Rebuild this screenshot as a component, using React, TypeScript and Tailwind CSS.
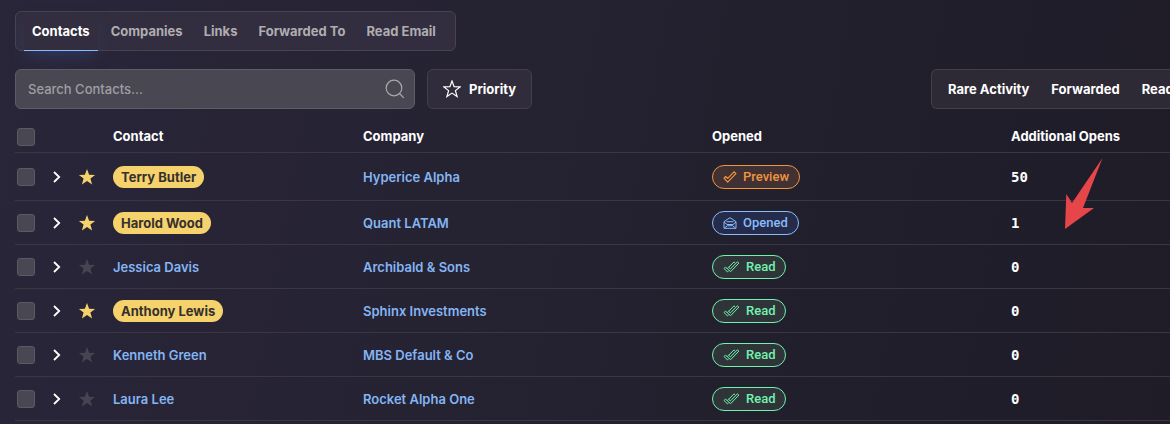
import React from 'react'
import clsx from 'clsx'

type Status = 'Preview' | 'Opened' | 'Read'

interface Contact {
  name: string
  company: string
  status: Status
  additionalOpens: number
  priority: boolean
}

const TABS = ['Contacts', 'Companies', 'Links', 'Forwarded To', 'Read Email']

const FILTERS = ['Rare Activity', 'Forwarded', 'Read']

const CONTACTS: Contact[] = [
  { name: 'Terry Butler', company: 'Hyperice Alpha', status: 'Preview', additionalOpens: 50, priority: true },
  { name: 'Harold Wood', company: 'Quant LATAM', status: 'Opened', additionalOpens: 1, priority: true },
  { name: 'Jessica Davis', company: 'Archibald & Sons', status: 'Read', additionalOpens: 0, priority: false },
  { name: 'Anthony Lewis', company: 'Sphinx Investments', status: 'Read', additionalOpens: 0, priority: true },
  { name: 'Kenneth Green', company: 'MBS Default & Co', status: 'Read', additionalOpens: 0, priority: false },
  { name: 'Laura Lee', company: 'Rocket Alpha One', status: 'Read', additionalOpens: 0, priority: false },
]

const STATUS_STYLES: Record<Status, string> = {
  Preview: 'border-[#f0953f] bg-[#413133] text-[#f0953f]',
  Opened: 'border-[#8abcfb] bg-[#252b4b] text-[#8abcfb]',
  Read: 'border-[#72f2ae] bg-[#2f3439] text-[#72f2ae]',
}

const STAR_PATH = 'M9 1l2.1 5.700 6 .2-4.700 3.700 1.700 5.900L9 13.100l-5.100 3.400 1.700-5.900L.9 6.900l6-.2z'

const StatusIcon = ({ status }: { status: Status }) => {
  if (status === 'Preview') {
    return (
      <svg width="14" height="12" viewBox="0 0 14 12" fill="none" stroke="currentColor" strokeWidth="1.2" strokeLinejoin="round" aria-hidden="true">
        <path d="M1 7.200l1.700-1.700 2 1.800L11 .8l1.900 1.800-8.200 8.500z" />
      </svg>
    )
  }
  if (status === 'Opened') {
    return (
      <svg width="14" height="12" viewBox="0 0 14 12" fill="none" stroke="currentColor" strokeLinejoin="round" aria-hidden="true">
        <path d="M1 4.600L7 .7l6 3.900v6.700H1z" />
        <path d="M1 5l3 2.500h6L13 5M1.400 11l3-2.300h5.200l3 2.300M3.500 4.700h7" />
      </svg>
    )
  }
  return (
    <svg width="17" height="12" viewBox="0 0 17 12" fill="none" stroke="currentColor" strokeLinejoin="round" aria-hidden="true">
      <path d="M4.200 7.600l1.400-1.300 1.800 1.600L14.400.8l1.500 1.300-8.300 8.600z" />
      <path d="M4.500 10.900L1 7.500l1.400-1.400 1.800 1.500M5.600 6.300L11 .9l1 .8M4.500 10.900l1.300-1.300" />
    </svg>
  )
}

const Checkbox = ({ label }: { label: string }) => (
  <input
    type="checkbox"
    aria-label={label}
    className="block h-[18px] w-[18px] appearance-none rounded-[3px] border border-[#5b5963] bg-[#494852] checked:bg-[#8abcfb]"
  />
)

const ContactRow = ({ contact }: { contact: Contact }) => (
  <tr className="h-11 border-b border-[#3a3742] first:h-12 [&>td]:pt-0.5">
    <td className="pl-[2px]">
      <Checkbox label={`Select ${contact.name}`} />
    </td>
    <td>
      <button type="button" aria-label={`Expand ${contact.name}`} className="block">
        <svg width="8" height="12" viewBox="0 0 8 12" fill="none" stroke="white" strokeWidth="1.8" aria-hidden="true">
          <path d="M1 1l5.200 5L1 11" />
        </svg>
      </button>
    </td>
    <td>
      <button
        type="button"
        aria-label={`Toggle priority for ${contact.name}`}
        className={clsx('block', contact.priority ? 'text-[#f5d26b]' : 'text-[#474452]')}
      >
        <svg width="18" height="18" viewBox="0 0 18 18" fill="currentColor" aria-hidden="true">
          <path d={STAR_PATH} />
        </svg>
      </button>
    </td>
    <td>
      <a
        href="#"
        className={clsx(
          contact.priority
            ? 'inline-block h-[22px] rounded-full bg-[#f5d26b] px-2 align-middle font-bold leading-[22px] text-[#35302f]'
            : 'font-semibold text-[#84b5f3]'
        )}
      >
        {contact.name}
      </a>
    </td>
    <td>
      <a href="#" className="font-semibold text-[#84b5f3]">{contact.company}</a>
    </td>
    <td>
      <span
        className={clsx(
          "inline-flex h-6 items-center gap-1.5 rounded-full border px-2.5 align-middle font-['Roboto',sans-serif] font-medium",
          STATUS_STYLES[contact.status]
        )}
      >
        <StatusIcon status={contact.status} />
        {contact.status}
      </span>
    </td>
    <td className="font-['DejaVu_Sans_Mono',monospace] text-sm font-bold">{contact.additionalOpens}</td>
  </tr>
)

const App: React.FC = () => {
  return (
    <main className="relative min-h-screen overflow-hidden bg-linear-[100deg] from-[#2a263a] via-[#242130] to-[#1f1c28] pt-[11px] pl-[15px] font-['Inter',sans-serif] text-[13px] leading-5 text-white">
      <nav className="flex h-10 w-fit gap-[5px] rounded-md border border-[#474351] bg-[#322e3f] pr-[11px] pl-2">
        {TABS.map((tab, index) => (
          <a
            key={tab}
            href="#"
            aria-current={index === 0 ? 'page' : undefined}
            className={clsx(
              '-mb-px flex items-center border-b px-2 font-bold',
              index === 0
                ? 'border-[#8abcfb] text-white shadow-[0_8px_16px_-4px_#34467a99]'
                : 'border-transparent text-[#b0adb1]'
            )}
          >
            {tab}
          </a>
        ))}
      </nav>

      <div className="mt-[18px] flex">
        <label className="flex h-10 w-[400px] items-center rounded-md border border-[#5e5c67] bg-[#494852] pr-[9px] pl-3">
          <input
            type="text"
            aria-label="Search contacts"
            placeholder="Search Contacts..."
            className="min-w-0 flex-1 bg-transparent font-medium outline-none placeholder:text-[#a09ea5]"
          />
          <svg width="20" height="20" viewBox="0 0 20 20" fill="none" stroke="#aaa8ad" strokeWidth="1.2" aria-hidden="true">
            <circle cx="9" cy="9" r="7.8" />
            <path d="M14.500 14.500l4.300 4.300" />
          </svg>
        </label>
        <button
          type="button"
          className="ml-3 flex h-10 items-center gap-2 rounded-md border border-[#423e4c] bg-[#302c3c] px-[15px] font-bold"
        >
          <svg width="18" height="18" viewBox="0 0 18 18" fill="none" stroke="white" strokeWidth="1.2" aria-hidden="true">
            <path d={STAR_PATH} />
          </svg>
          Priority
        </button>
        <div className="ml-auto flex h-10 w-[239px] shrink-0 gap-[22px] overflow-hidden rounded-l-md border border-r-0 border-[#423f4b] bg-[#2d2a36] pl-4">
          {FILTERS.map(filter => (
            <button key={filter} type="button" className="shrink-0 font-bold">
              {filter}
            </button>
          ))}
        </div>
      </div>

      <table className="mt-3 w-full table-fixed border-collapse text-left">
        <colgroup>
          <col className="w-[38px]" />
          <col className="w-[25px]" />
          <col className="w-[35px]" />
          <col className="w-[250px]" />
          <col className="w-[349px]" />
          <col className="w-[299px]" />
          <col />
        </colgroup>
        <thead>
          <tr className="h-[31px] border-b border-[#3a3742]">
            <th className="pt-0.5 pl-[2px]">
              <Checkbox label="Select all contacts" />
            </th>
            <th />
            <th />
            <th className="font-bold">Contact</th>
            <th className="font-bold">Company</th>
            <th className="font-bold">Opened</th>
            <th className="font-bold">Additional Opens</th>
          </tr>
        </thead>
        <tbody>
          {CONTACTS.map(contact => (
            <ContactRow key={contact.name} contact={contact} />
          ))}
        </tbody>
      </table>

      <svg
        width="40"
        height="73"
        viewBox="0 0 40 73"
        className="pointer-events-none absolute top-[157px] left-[1064px]"
        aria-hidden="true"
      >
        <path d="M38.500 1L19 51h11L1 72l1.300-35 5.700 9z" fill="#e64649" />
      </svg>
    </main>
  )
}

export default App
